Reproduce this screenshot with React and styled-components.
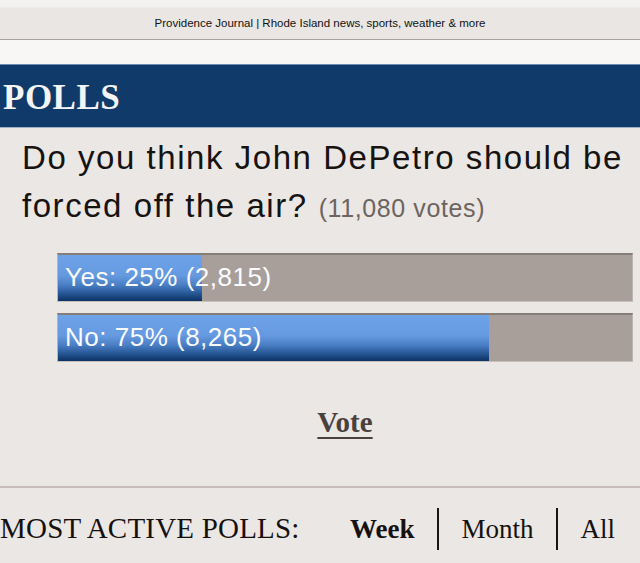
import React from 'react';
import styled, { createGlobalStyle } from 'styled-components';

const GlobalStyle = createGlobalStyle`
  html, body {
    margin: 0;
    padding: 0;
    background: #ebe7e4;
  }
  body {
    width: 640px;
    height: 563px;
    overflow: hidden;
  }
`;

const poll = {
  question: ['Do you think John DePetro should be', 'forced off the air?'],
  total: '11,080',
  answers: [
    { id: 'yes', label: 'Yes', percent: 25, votes: '2,815' },
    { id: 'no', label: 'No', percent: 75, votes: '8,265' },
  ],
};

const tabs = [
  { id: 'week', label: 'Week', active: true },
  { id: 'month', label: 'Month' },
  { id: 'all', label: 'All' },
];

const App = () => (
  <>
    <GlobalStyle />
    <Page>
      <TopBar>Providence Journal | Rhode Island news, sports, weather &amp; more</TopBar>
      <Gap />
      <Banner>
        <BannerTitle>POLLS</BannerTitle>
      </Banner>
      <Question>
        <QuestionLine>{poll.question[0]}</QuestionLine>
        <QuestionLine>
          {poll.question[1]}
          <VoteCount>({poll.total} votes)</VoteCount>
        </QuestionLine>
      </Question>
      <Results>
        {poll.answers.map(({ id, label, percent, votes }) => (
          <Bar key={id}>
            <Fill style={{ width: `${percent}%` }} />
            <BarLabel>
              {label}: {percent}% ({votes})
            </BarLabel>
          </Bar>
        ))}
      </Results>
      <VoteRow>
        <VoteLink href="#">Vote</VoteLink>
      </VoteRow>
      <Divider />
      <ActiveRow>
        <ActiveTitle>MOST ACTIVE POLLS:</ActiveTitle>
        <Tabs>
          {tabs.map(({ id, label, active }) => (
            <Tab key={id} $active={active}>
              {label}
            </Tab>
          ))}
        </Tabs>
      </ActiveRow>
    </Page>
  </>
);

export default App;

const Page = styled.div`
  width: 640px;
  height: 563px;
  display: flex;
  flex-direction: column;
  background: #ebe7e4;
  overflow: hidden;
`;

const TopBar = styled.div`
  height: 40px;
  box-sizing: border-box;
  padding-top: 7px;
  display: flex;
  align-items: center;
  justify-content: center;
  background: linear-gradient(#f4f2f1 0, #f4f2f1 7px, #e9e6e3 8px);
  border-bottom: 1px solid #aaa29e;
  font-family: 'Liberation Sans', Arial, sans-serif;
  font-size: 11.5px;
  color: #151210;
`;

const Gap = styled.div`
  height: 24px;
  background: #f8f7f6;
`;

const Banner = styled.div`
  height: 62px;
  display: flex;
  align-items: center;
  padding-left: 3px;
  background: #0f3a6a;
  border-top: 1px solid #6d8cb3;
  border-bottom: 1px solid #9fb1c7;
`;

const BannerTitle = styled.h1`
  margin: 4px 0 0;
  font-family: 'Liberation Serif', 'Times New Roman', serif;
  font-weight: bold;
  font-size: 35px;
  letter-spacing: 0.5px;
  color: #f4f4f4;
`;

const Question = styled.div`
  margin-top: 6px;
  padding-left: 22px;
  display: flex;
  flex-direction: column;
  font-family: 'Liberation Sans', Arial, sans-serif;
  font-size: 33px;
  line-height: 48px;
  letter-spacing: 1.55px;
  color: #161311;
`;

const QuestionLine = styled.div`
  display: flex;
  align-items: baseline;
  gap: 11px;
  white-space: nowrap;
`;

const VoteCount = styled.span`
  font-size: 25px;
  letter-spacing: 0.6px;
  color: #6d6460;
`;

const Results = styled.div`
  display: flex;
  flex-direction: column;
  gap: 11px;
  margin: 21px 7px 0 57px;
`;

const Bar = styled.div`
  position: relative;
  height: 46px;
  background: #a89f9a;
  border-top: 2px solid #857d78;
  border-left: 1px solid #bcb4b0;
  border-right: 1px solid #bcb4b0;
  border-bottom: 1px solid #c6bfbb;
  display: flex;
  align-items: center;
`;

const Fill = styled.div`
  position: absolute;
  left: 0;
  top: 0;
  bottom: 0;
  background: linear-gradient(
    #6ea3e9 0%,
    #6599e0 45%,
    #4a7fc6 65%,
    #2a5a99 82%,
    #0b3264 100%
  );
`;

const BarLabel = styled.span`
  position: relative;
  padding-left: 7px;
  padding-bottom: 2px;
  font-family: 'Liberation Sans', Arial, sans-serif;
  font-size: 26px;
  letter-spacing: 0.5px;
  color: #fafcff;
`;

const VoteRow = styled.div`
  display: flex;
  justify-content: center;
  padding: 44px 0 0 50px;
  height: 92px;
  box-sizing: border-box;
`;

const VoteLink = styled.a`
  font-family: 'Liberation Serif', 'Times New Roman', serif;
  font-weight: bold;
  font-size: 29px;
  color: #4b413c;
  text-decoration: underline;
  text-decoration-thickness: 2px;
  text-underline-offset: 5px;
  height: 34px;
`;

const Divider = styled.div`
  margin-top: 32px;
  height: 2px;
  background: #c7bebb;
`;

const ActiveRow = styled.div`
  display: flex;
  align-items: baseline;
  padding-top: 20px;
  font-family: 'Liberation Serif', 'Times New Roman', serif;
  color: #15110f;
`;

const ActiveTitle = styled.div`
  font-size: 29px;
  letter-spacing: 0.2px;
  width: 350px;
`;

const Tabs = styled.div`
  display: flex;
  align-items: baseline;
`;

const Tab = styled.div`
  font-size: 27px;
  font-weight: ${(p) => (p.$active ? 'bold' : 'normal')};
  padding: 4px 22px 4px 23px;
  border-left: 2px solid #1a1512;
  line-height: 34px;

  &:first-child {
    padding-left: 0;
    border-left: none;
  }
`;
